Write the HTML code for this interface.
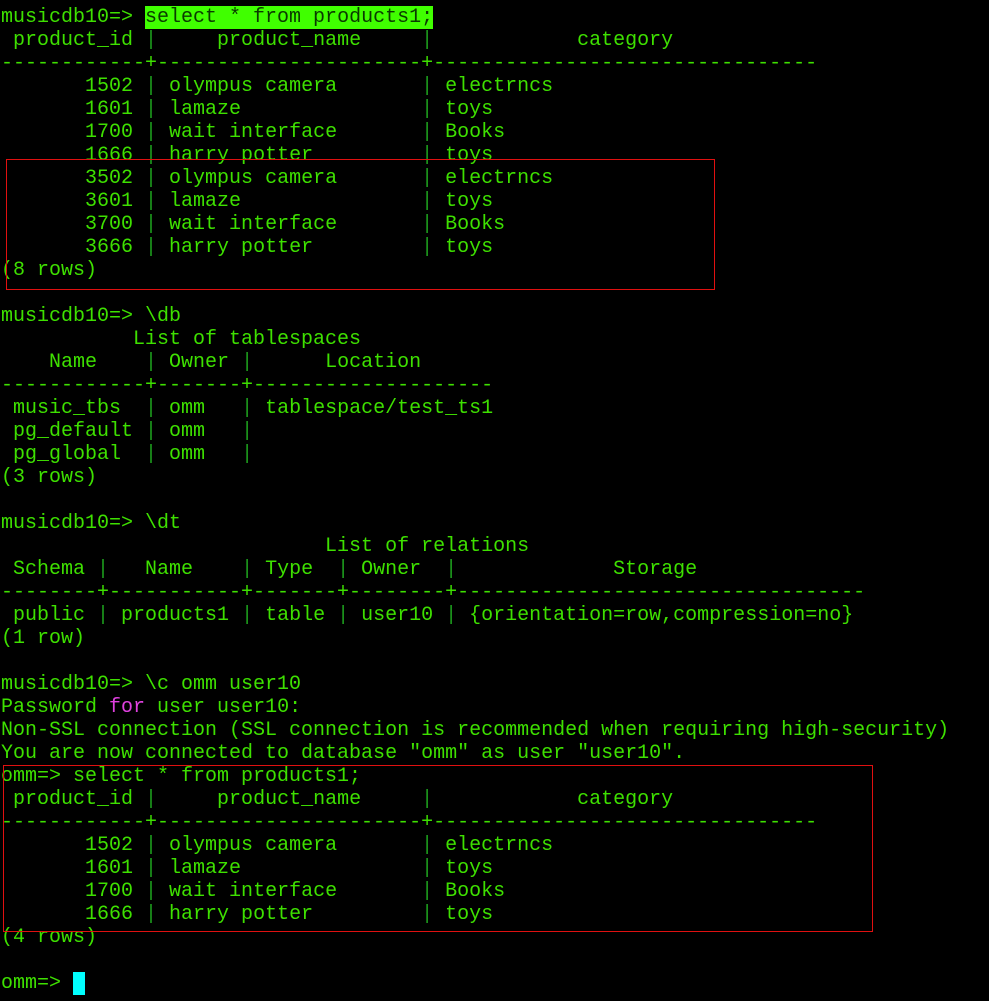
<!DOCTYPE html>
<html><head><meta charset="utf-8"><style>
html,body{margin:0;padding:0;background:#000;width:989px;height:1001px;overflow:hidden}
pre{margin:0;padding:6px 0 0 1px;font-family:"Liberation Mono","Noto Sans CJK SC",monospace;font-size:20px;line-height:23px;color:#3ee000;white-space:pre}
.b{color:#1c9a1c}
.hl{background:#40ff00;color:#0a3a00}
.m{color:#e040e0}
.cur{background:#00ffff;color:#00ffff}
.box{position:absolute;border:1px solid #e01010}
</style></head><body>
<pre>musicdb10=&gt; <span class="hl">select * from products1;</span>
 product_id <span class="b">|</span>     product_name     <span class="b">|</span>            category
------------+----------------------+--------------------------------
       1502 <span class="b">|</span> olympus camera       <span class="b">|</span> electrncs
       1601 <span class="b">|</span> lamaze               <span class="b">|</span> toys
       1700 <span class="b">|</span> wait interface       <span class="b">|</span> Books
       1666 <span class="b">|</span> harry potter         <span class="b">|</span> toys
       3502 <span class="b">|</span> olympus camera       <span class="b">|</span> electrncs
       3601 <span class="b">|</span> lamaze               <span class="b">|</span> toys
       3700 <span class="b">|</span> wait interface       <span class="b">|</span> Books
       3666 <span class="b">|</span> harry potter         <span class="b">|</span> toys
(8 rows)

musicdb10=&gt; \db
           List of tablespaces
    Name    <span class="b">|</span> Owner <span class="b">|</span>      Location
------------+-------+--------------------
 music_tbs  <span class="b">|</span> omm   <span class="b">|</span> tablespace/test_ts1
 pg_default <span class="b">|</span> omm   <span class="b">|</span>
 pg_global  <span class="b">|</span> omm   <span class="b">|</span>
(3 rows)

musicdb10=&gt; \dt
                           List of relations
 Schema <span class="b">|</span>   Name    <span class="b">|</span> Type  <span class="b">|</span> Owner  <span class="b">|</span>             Storage
--------+-----------+-------+--------+----------------------------------
 public <span class="b">|</span> products1 <span class="b">|</span> table <span class="b">|</span> user10 <span class="b">|</span> {orientation=row,compression=no}
(1 row)

musicdb10=&gt; \c omm user10
Password <span class="m">for</span> user user10:
Non-SSL connection (SSL connection is recommended when requiring high-security)
You are now connected to database "omm" as user "user10".
omm=&gt; select * from products1;
 product_id <span class="b">|</span>     product_name     <span class="b">|</span>            category
------------+----------------------+--------------------------------
       1502 <span class="b">|</span> olympus camera       <span class="b">|</span> electrncs
       1601 <span class="b">|</span> lamaze               <span class="b">|</span> toys
       1700 <span class="b">|</span> wait interface       <span class="b">|</span> Books
       1666 <span class="b">|</span> harry potter         <span class="b">|</span> toys
(4 rows)

omm=&gt; <span class="cur"> </span></pre>
<div class="box" style="left:6px;top:159px;width:707px;height:129px"></div>
<div class="box" style="left:3px;top:765px;width:868px;height:165px"></div>
</body></html>
